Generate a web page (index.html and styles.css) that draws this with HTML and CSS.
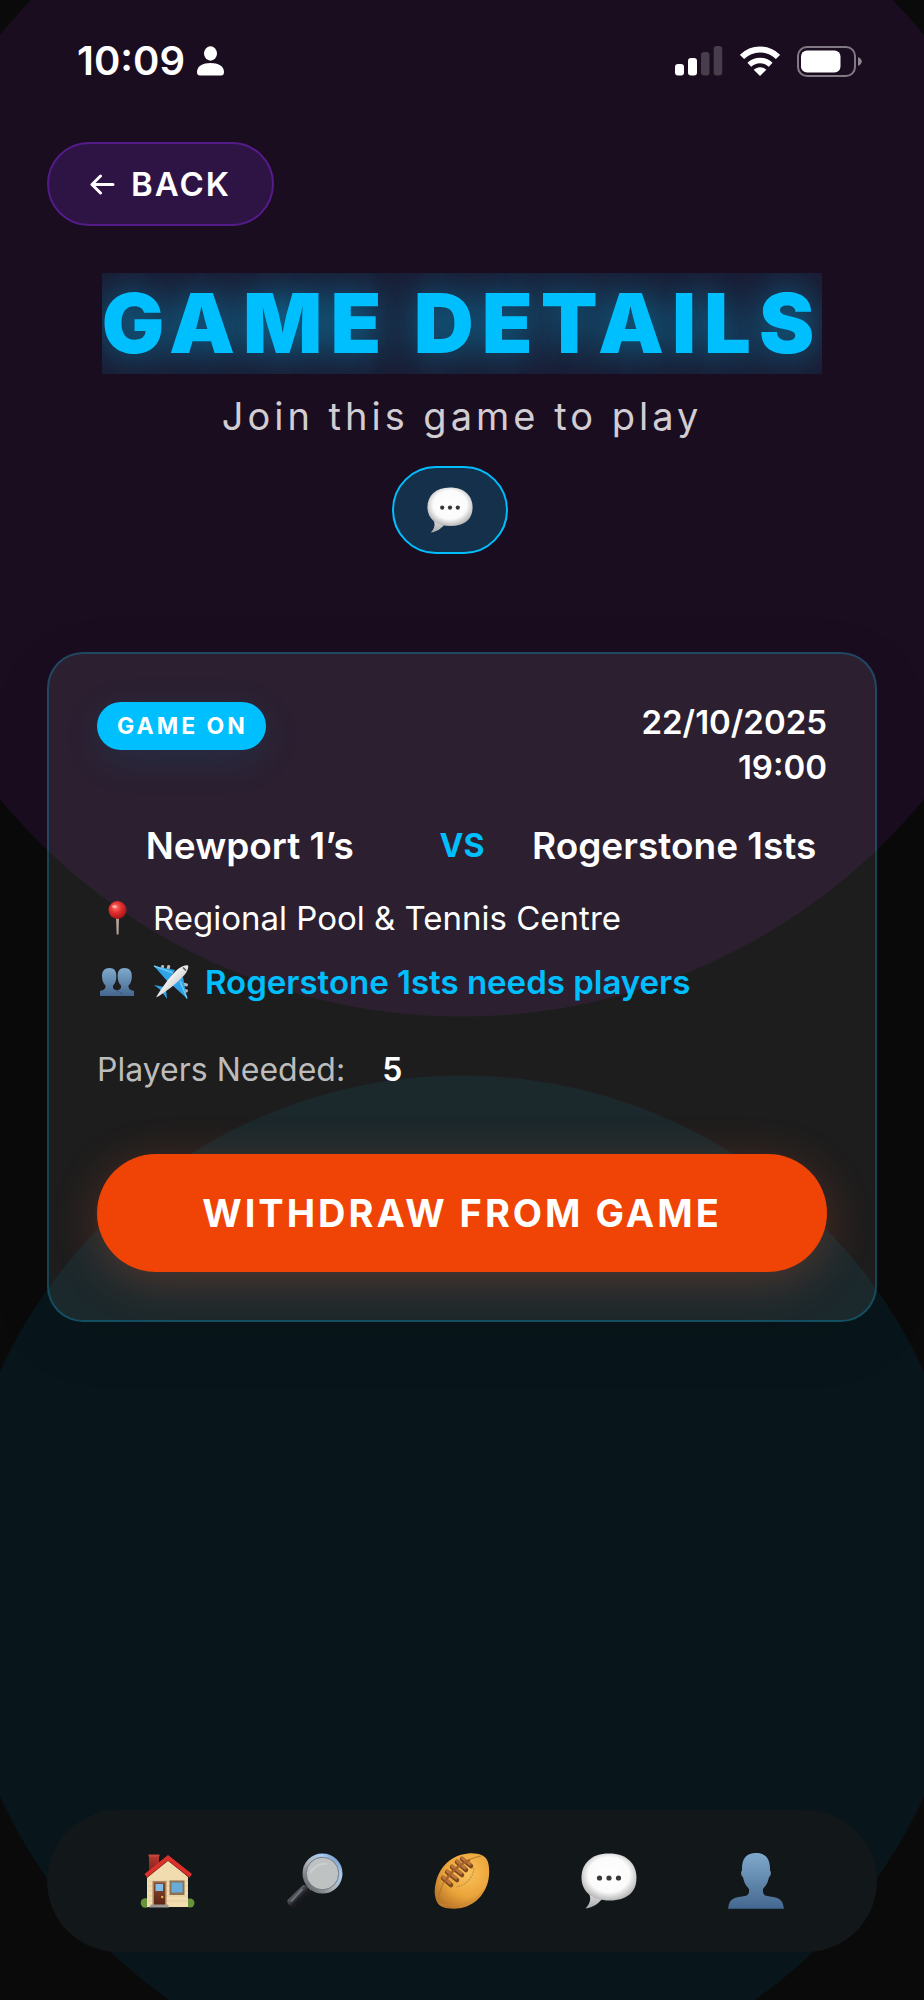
FILE: index.html
```html
<!DOCTYPE html>
<html lang="en">
<head>
<meta charset="utf-8">
<meta name="viewport" content="width=device-width, initial-scale=1">
<title>Game Details</title>
<link rel="stylesheet" href="styles.css">
</head>
<body>
<svg class="defs" aria-hidden="true">
  <defs>
    <radialGradient id="bubble-fill" cx=".5" cy=".45" r=".6"><stop offset="0" stop-color="#fff"/><stop offset=".62" stop-color="#fbfbfb"/><stop offset="1" stop-color="#a5a5a5"/></radialGradient>
    <linearGradient id="tail-fill" x1="0" y1="0" x2="0" y2="1"><stop offset="0" stop-color="#dcdcdc"/><stop offset="1" stop-color="#a9a9a9"/></linearGradient>
    <linearGradient id="person-fill" x1="0" y1="0" x2="0" y2="1"><stop offset="0" stop-color="#7fa9cc"/><stop offset="1" stop-color="#45678f"/></linearGradient>
    <radialGradient id="pin-fill" cx=".4" cy=".35" r=".65"><stop offset="0" stop-color="#ff7a70"/><stop offset=".45" stop-color="#e5322f"/><stop offset="1" stop-color="#a81418"/></radialGradient>
    <linearGradient id="plane-body" x1="0" y1="0" x2="1" y2="1"><stop offset=".3" stop-color="#fff"/><stop offset="1" stop-color="#a5a5a8"/></linearGradient>
    <linearGradient id="rim-fill" x1="0" y1="1" x2="1" y2="0"><stop offset="0" stop-color="#55585c"/><stop offset=".45" stop-color="#aeb4ba"/><stop offset=".75" stop-color="#a9cdf6"/><stop offset="1" stop-color="#5e7dab"/></linearGradient>
    <linearGradient id="handle-fill" x1="0" y1="0" x2="1" y2="1"><stop offset="0" stop-color="#3c3e42"/><stop offset=".35" stop-color="#55585e"/><stop offset=".55" stop-color="#1b1c1f"/><stop offset="1" stop-color="#08090a"/></linearGradient>
    <radialGradient id="ball-fill" cx=".6" cy=".35" r=".7"><stop offset="0" stop-color="#fbc35a"/><stop offset=".6" stop-color="#eba53b"/><stop offset="1" stop-color="#bd7827"/></radialGradient>
    <linearGradient id="door-fill" x1="0" y1="0" x2="0" y2="1"><stop offset="0" stop-color="#8a4a30"/><stop offset="1" stop-color="#5c2416"/></linearGradient>
    <linearGradient id="chimney-fill" x1="0" y1="0" x2="0" y2="1"><stop offset="0" stop-color="#c03a31"/><stop offset="1" stop-color="#6e1d1b"/></linearGradient>
    <symbol id="bubble" viewBox="0 0 56 56">
      <path d="M8 41C11 46 8 52 4.500 55.500 12 54.500 17 51 21 46Z" fill="url(#tail-fill)"/>
      <path d="M28 .5C46 .5 55.500 11 55.500 25S46 47.500 29 47.500C10 47.500.5 38 .5 24.500S10 .5 28 .5Z" fill="url(#bubble-fill)"/>
      <circle cx="18.500" cy="25" r="2.600" fill="#38383a"/><circle cx="28" cy="25" r="2.600" fill="#38383a"/><circle cx="37.500" cy="25" r="2.600" fill="#38383a"/>
    </symbol>
    <symbol id="person" viewBox="0 0 56 56">
      <path d="M28 0C38 0 42.500 6 42 17.500 43.500 18.500 43 23 41 24 40 30 37.500 33 35 36V39C35.500 42.500 38 43 42 43.500 51 44.500 55.500 47 55.800 56H.2C.5 47 5 44.500 14 43.500 18 43 20.500 42.500 21 39V36C18.500 33 16 30 15 24 13 23 12.500 18.500 14 17.500 13.500 6 18 0 28 0Z" fill="url(#person-fill)"/>
      <path d="M.5 55.500H55.500" stroke="#35547a"/>
    </symbol>
  </defs>
</svg>

<div class="screen">
  <div class="status-bar">
    <div class="status-group">
      <span class="clock">10:09</span>
      <svg class="status-person" viewBox="0 0 27 30" fill="#fff" aria-hidden="true"><ellipse cx="13.500" cy="7.500" rx="6.500" ry="7.200"/><path d="M0 26C0 20 6 17 13.500 17S27 20 27 26C27 28.500 26 29.500 24 29.500H3C1 29.500 0 28.500 0 26Z"/></svg>
    </div>
    <div class="status-group status-icons">
      <svg class="signal" viewBox="0 0 48 30" fill="#fff" aria-hidden="true"><rect x="0" y="18" width="9" height="11.500" rx="3"/><rect x="13" y="12" width="9" height="17.500" rx="3"/><rect x="26" y="6" width="8.500" height="23.500" rx="3" opacity=".2"/><rect x="38.700" y="0" width="8.500" height="29.500" rx="3" opacity=".2"/></svg>
      <svg class="wifi" viewBox="0 0 40 30" fill="none" stroke="#fff" aria-hidden="true"><path d="M2 11C12 1 28 1 38 11" stroke-width="6"/><path d="M9.300 18.700C15.500 13 24.500 13 30.700 18.700" stroke-width="5.500"/><path d="M20 30 13.700 23.700C17.500 20.300 22.500 20.300 26.300 23.700Z" fill="#fff" stroke="none"/></svg>
      <svg class="battery" viewBox="0 0 65 31" aria-hidden="true"><rect x="1" y="1" width="57" height="29" rx="9" fill="none" stroke="#fff" stroke-opacity=".45" stroke-width="2"/><rect x="4" y="4.500" width="39.500" height="22" rx="6" fill="#fff"/><path d="M61 11C66 13 66 18 61 20Z" fill="#fff" opacity=".5"/></svg>
    </div>
  </div>

  <button class="back" type="button">
    <svg class="back-arrow" viewBox="0 0 25 21" fill="none" stroke="#fff" stroke-width="3" stroke-linecap="round" stroke-linejoin="round" aria-hidden="true"><path d="M23 10.500H2M10.500 2 2 10.500 10.500 19"/></svg>
    BACK
  </button>

  <header class="heading">
    <h1 class="title">GAME DETAILS</h1>
    <p class="subtitle">Join this game to play</p>
    <button class="chat" type="button" aria-label="Open game chat"><svg class="chat-icon" aria-hidden="true"><use href="#bubble"/></svg></button>
  </header>

  <main class="card">
    <div class="card-top">
      <span class="badge">GAME ON</span>
      <div class="when"><span>22/10/2025</span><span>19:00</span></div>
    </div>
    <div class="teams">
      <span class="team">Newport 1’s</span>
      <span class="versus">VS</span>
      <span class="team">Rogerstone 1sts</span>
    </div>
    <div class="details">
      <div class="detail">
        <span class="detail-icon"><svg class="pin" viewBox="0 0 19 34" aria-hidden="true"><path d="M8 16H11L10.500 33.500H8.700Z" fill="#b9a49c"/><circle cx="9.500" cy="9" r="9" fill="url(#pin-fill)"/><ellipse cx="6.500" cy="5.500" rx="2.300" ry="1.600" fill="#ffc0ba" opacity=".8"/></svg></span>
        <span>Regional Pool &amp; Tennis Centre</span>
      </div>
      <div class="detail">
        <span class="detail-icon"><svg class="people" viewBox="0 0 34 28" fill="url(#person-fill)" aria-hidden="true"><path d="M9.500 0C14.500 0 16.500 3 16.300 8.500 16.300 13 15 15.500 13 17.500 12.800 20.500 13.500 21.500 17 22.500 20.500 21.500 21.200 20.500 21 17.500 19 15.500 17.700 13 17.700 8.500 17.500 3 19.500 0 24.500 0S32 3 31.800 8.500C31.800 13 30.500 15.500 28.500 17.500 28.300 21 30 22 34 23V28H0V23C4 22 5.700 21 5.500 17.500 3.500 15.500 2 13 2 8.500 1.800 3 4.500 0 9.500 0Z"/><path d="M17 22.700 22 25.500 22.500 28" fill="none" stroke="#3c5d84"/></svg></span>
        <svg class="plane" viewBox="0 0 36 36" aria-hidden="true">
          <g fill="#bcbcc0"><rect x="8" y="1" width="3" height="5" rx="1" transform="rotate(15 9 3)"/><rect x="14" y="1" width="3" height="5" rx="1" transform="rotate(15 15 3)"/><rect x="30" y="19" width="5" height="3" rx="1" transform="rotate(15 32 20)"/><rect x="30" y="25" width="5" height="3" rx="1" transform="rotate(15 32 26)"/></g>
          <path d="M1 2 22 6 15 18ZM34 34.500 30 13 18 20ZM1 21 11 23 9 27ZM14 35 13 25 9 28Z" fill="#2ea3e6"/>
          <path d="M1 2 20 9M34 34.500 27 17" stroke="#6cc8f7" stroke-width="1.500"/>
          <path d="M3 33.500C6 28 16 13 25 5 29 1.500 34 .5 35 1.500S34.500 7.500 31 11.500C24 19.500 10 30 3 33.500Z" fill="url(#plane-body)"/>
          <path d="M30 3.500 33 6.500" stroke="#55565a" stroke-width="1.500"/>
        </svg>
        <span class="need">Rogerstone 1sts needs players</span>
      </div>
    </div>
    <div class="count"><span class="count-label">Players Needed:</span><span class="count-value">5</span></div>
    <button class="withdraw" type="button">WITHDRAW FROM GAME</button>
  </main>

  <nav class="tabs" aria-label="Main">
    <button class="tab" type="button" aria-label="Home">
      <svg class="tab-icon" viewBox="0 0 56 56" aria-hidden="true">
        <path d="M9 2H19V14L9 21Z" fill="url(#chimney-fill)"/><path d="M8.500 1.500H19.500V3.500H8.500Z" fill="#c9463c"/>
        <circle cx="5.500" cy="50" r="4.800" fill="#68933a"/><circle cx="50" cy="50" r="4.500" fill="#68933a"/>
        <path d="M7 24 28 6 48 24V54H7Z" fill="#f1dcb0"/>
        <path d="M8 28H48M8 33H48M8 38H48M8 43H48M8 48H48" stroke="#d9c294" stroke-width=".6"/>
        <path d="M28 2 52 21 49.500 24.500 28 7.500 7 24.500 4.500 21Z" fill="#dc302b"/><path d="M7 24.500 28 7.500 49.500 24.500" fill="none" stroke="#8f2921"/>
        <rect x="12.500" y="28" width="14" height="24" fill="#a78360"/><rect x="14" y="29.500" width="11" height="22.500" fill="url(#door-fill)"/><rect x="15.500" y="31" width="7.500" height="7" fill="#80bee5"/><circle cx="22.200" cy="44" r="1.200" fill="#e7b53f"/>
        <rect x="29.500" y="27.500" width="15" height="14.500" fill="#8e7253"/><rect x="31.500" y="29.500" width="11" height="10" fill="#69acd9"/>
        <path d="M11 51.500H28L29 54.500H9Z" fill="#9e9791"/>
      </svg>
    </button>
    <button class="tab" type="button" aria-label="Search">
      <svg class="tab-icon" viewBox="0 0 56 56" aria-hidden="true">
        <path d="M21 33 24 37 20 41 16 37Z" fill="#b9bdc2"/>
        <path d="M16 32C19 31 25 37 24 40L11 54.500C7 57 -1 51 .5 47Z" fill="url(#handle-fill)"/>
        <path d="M15 36.500 4.500 48" stroke="#6c7078" stroke-width="2" stroke-linecap="round"/>
        <circle cx="35.500" cy="20.500" r="18" fill="#bfc2c2" stroke="url(#rim-fill)" stroke-width="4"/>
        <circle cx="35.500" cy="20.500" r="16.300" fill="none" stroke="#777b80"/>
        <path d="M23 20C27 13 34 10 40 11" fill="none" stroke="#d5d7d7" stroke-width="2" opacity=".6"/>
      </svg>
    </button>
    <button class="tab" type="button" aria-label="Games">
      <svg class="tab-icon" viewBox="0 0 56 56" aria-hidden="true">
        <path d="M34 .5C44 -.5 51 3 52.500 6 56 11 56 24 53 32 48 46 36 55.500 20 55.700 12 55.800 6 54 3.500 50 0 44 0 36 2 29 6 13 18 2 34 .5Z" fill="url(#ball-fill)"/>
        <path d="M47 3C32 6 14 16 8 33 5 40 4 46 5 51" fill="none" stroke="#b27b30" stroke-width="1.200"/>
        <path d="M40 15C39 25 32 32 22 34" fill="none" stroke="#c39042" stroke-width="1.200" stroke-dasharray="2 1"/>
        <path d="M5 51C25 55 42 49 50 37" fill="none" stroke="#c58b39" stroke-dasharray="2 1"/>
        <path d="M9 25 17 32M13 19 23 27M18 14 28 22M23 9 32 17M28 6 37 13" stroke="#7c461e" stroke-width="4.500" stroke-linecap="round"/>
        <path d="M9 24 16 30M13 18 22 25M18 13 27 20M23 8 31 15M28 5 36 11" stroke="#b97438" stroke-width="3" stroke-linecap="round"/>
        <path d="M11 29C16 20 24 12 36 7" fill="none" stroke="#a6622d" stroke-width="2"/>
      </svg>
    </button>
    <button class="tab" type="button" aria-label="Messages"><svg class="tab-icon" aria-hidden="true"><use href="#bubble"/></svg></button>
    <button class="tab" type="button" aria-label="Profile"><svg class="tab-icon" aria-hidden="true"><use href="#person"/></svg></button>
  </nav>
</div>
</body>
</html>
```

FILE: styles.css
```css
* {
  box-sizing: border-box;
}

body {
  margin: 0;
  background-color: #0a0a0a;
  color: #fff;
  font-family: Inter, Roboto, "Liberation Sans", sans-serif;
}

button {
  font: inherit;
  color: inherit;
  cursor: pointer;
}

svg {
  display: block;
  flex: none;
}

.defs {
  position: absolute;
  width: 0;
  height: 0;
}

.screen {
  display: flex;
  flex-direction: column;
  min-height: 100vh;
  padding: 0 47px 48px;
  background-image:
    radial-gradient(circle at 50% 417px, #1a0d1f 599px, transparent 600px),
    radial-gradient(circle at 50% 1584px, #08161b 508px, transparent 509px);
}

/* Status bar */
.status-bar {
  display: flex;
  justify-content: space-between;
  align-items: center;
  height: 142px;
  padding: 0 15px 20px 30px;
}

.status-group {
  display: flex;
  align-items: center;
  gap: 12px;
}

.status-icons {
  gap: 17px;
}

.clock {
  font-size: 40px;
  font-weight: 600;
  line-height: 48px;
}

.status-person {
  width: 27px;
  height: 30px;
}

.signal {
  width: 48px;
  height: 30px;
}

.wifi {
  width: 40px;
  height: 30px;
}

.battery {
  width: 65px;
  height: 31px;
}

/* Heading */
.back {
  display: flex;
  align-items: center;
  align-self: flex-start;
  gap: 16px;
  padding: 20px 41px;
  border: 2px solid #541c88;
  border-radius: 42px;
  background: #2e1345;
  font-size: 33px;
  font-weight: 600;
  line-height: 40px;
  letter-spacing: 2px;
}

.back-arrow {
  width: 25px;
  height: 21px;
}

.heading {
  display: flex;
  flex-direction: column;
  align-items: center;
  margin: 47px 0 98px;
}

.title {
  margin: 0;
  overflow: hidden;
  background: #1a1a30;
  color: #00bfff;
  font-size: 83px;
  font-weight: 900;
  line-height: 101px;
  letter-spacing: 8px;
  text-shadow: 0 0 40px rgba(0, 191, 255, 0.6);
}

.subtitle {
  margin: 18px 0 26px;
  color: #d1cdd2;
  font-size: 38px;
  font-weight: 400;
  line-height: 48px;
  letter-spacing: 4px;
}

.chat {
  margin-right: 24px;
  padding: 19px 33px;
  border: 2px solid #00bfff;
  border-radius: 44px;
  background: #14304b;
}

.chat-icon {
  width: 46px;
  height: 46px;
}

/* Game card */
.card {
  padding: 46px 48px 48px;
  border: 2px solid rgba(0, 191, 255, 0.25);
  border-radius: 36px;
  background: rgba(255, 255, 255, 0.08);
  box-shadow: 0 16px 64px rgba(0, 0, 0, 0.08);
}

.card-top {
  display: flex;
  justify-content: space-between;
  align-items: flex-start;
}

.badge {
  margin-top: 2px;
  padding: 0 18px 0 20px;
  border-radius: 24px;
  background: #00bfff;
  box-shadow: 0 10px 40px rgba(0, 191, 255, 0.1);
  font-size: 23px;
  font-weight: 700;
  line-height: 48px;
  letter-spacing: 3px;
}

.when {
  display: flex;
  flex-direction: column;
  align-items: flex-end;
  font-size: 33px;
  font-weight: 600;
  line-height: 45px;
}

.teams {
  display: flex;
  align-items: center;
  gap: 37px;
  margin: 32px 0 28px;
}

.team {
  flex: 1 1 0;
  font-size: 37px;
  font-weight: 600;
  line-height: 48px;
  text-align: center;
  white-space: nowrap;
}

.versus {
  color: #00bfff;
  font-size: 32px;
  font-weight: 700;
  line-height: 48px;
}

.details {
  display: flex;
  flex-direction: column;
  gap: 24px;
}

.detail {
  display: flex;
  align-items: center;
  gap: 16px;
  font-size: 33px;
  font-weight: 400;
  line-height: 40px;
}

.detail-icon {
  display: flex;
  justify-content: center;
  width: 40px;
}

.pin {
  width: 19px;
  height: 34px;
}

.people {
  width: 34px;
  height: 28px;
}

.plane {
  width: 36px;
  height: 36px;
}

.need {
  color: #00bfff;
  font-weight: 600;
}

.count {
  display: flex;
  gap: 37px;
  margin: 48px 0 64px;
  font-size: 32px;
  line-height: 40px;
}

.count-label {
  color: #bcbcbc;
}

.count-value {
  font-weight: 600;
}

.withdraw {
  display: block;
  width: 100%;
  padding: 34px 24px;
  border: 0;
  border-radius: 59px;
  background: #ef4405;
  box-shadow: 0 10px 48px rgba(255, 106, 60, 0.24);
  font-size: 38px;
  font-weight: 700;
  line-height: 50px;
  letter-spacing: 3px;
}

/* Bottom tabs */
.tabs {
  display: flex;
  justify-content: space-between;
  margin-top: auto;
  padding: 0 47px;
  border-radius: 71px;
  background: #12171a;
}

.tab {
  display: flex;
  flex: 1 1 0;
  justify-content: center;
  padding: 43px 0;
  border: 0;
  background: none;
}

.tab-icon {
  width: 56px;
  height: 56px;
}
```
